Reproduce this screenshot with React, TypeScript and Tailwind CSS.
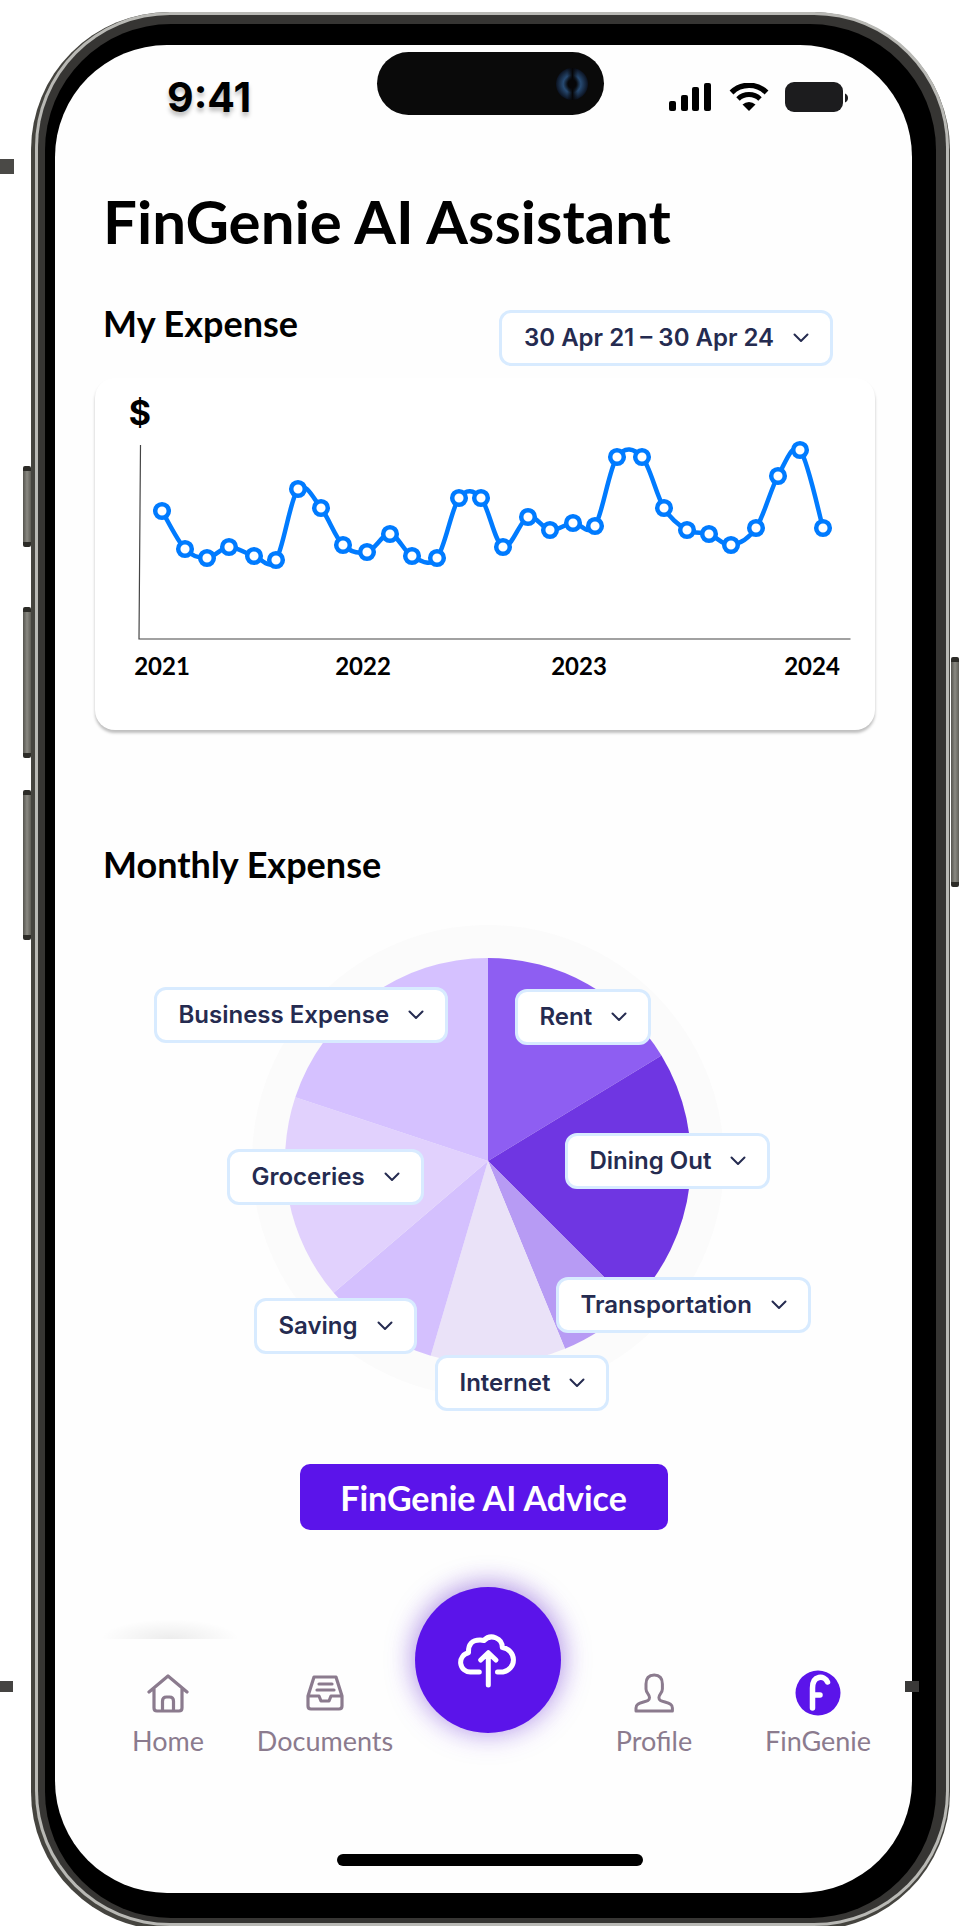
import React from 'react';

const points: [number, number][] = [
  [162, 511], [185, 549], [207, 558], [229, 547], [254, 556], [276, 560], [298, 489], [321, 508],
  [343, 545], [367, 552], [390, 534], [412, 556], [437, 558], [459, 498], [481, 498], [503, 547],
  [528, 517], [550, 530], [573, 523], [595, 526], [617, 457], [642, 457], [664, 508], [687, 530],
  [709, 534], [731, 545], [756, 528], [778, 476], [800, 450], [823, 528],
].map(([x, y]) => [x - 95, y - 378]);

function smoothPath(pts: [number, number][]) {
  let d = `M${pts[0][0]} ${pts[0][1]}`;
  for (let i = 0; i < pts.length - 1; i++) {
    const p0 = pts[Math.max(0, i - 1)];
    const p1 = pts[i];
    const p2 = pts[i + 1];
    const p3 = pts[Math.min(pts.length - 1, i + 2)];
    d += ` C${p1[0] + (p2[0] - p0[0]) / 6} ${p1[1] + (p2[1] - p0[1]) / 6} ${p2[0] - (p3[0] - p1[0]) / 6} ${p2[1] - (p3[1] - p1[1]) / 6} ${p2[0]} ${p2[1]}`;
  }
  return d;
}

const slices = [
  { from: 0, to: 58.7, color: '#8e5ef2' },
  { from: 58.7, to: 135, color: '#6f36e2' },
  { from: 135, to: 157.7, color: '#b79bf4' },
  { from: 157.7, to: 196.4, color: '#eae2f8' },
  { from: 196.4, to: 229.5, color: '#d4c0fe' },
  { from: 229.5, to: 288.3, color: '#e1d1fd' },
  { from: 288.3, to: 360, color: '#d5c1ff' },
];

function slicePath(from: number, to: number) {
  const r = 203;
  const at = (deg: number) => {
    const a = (deg * Math.PI) / 180;
    return `${236 + r * Math.sin(a)} ${236 - r * Math.cos(a)}`;
  };
  return `M236 236 L${at(from)} A${r} ${r} 0 0 1 ${at(to)} Z`;
}

function Dropdown({ label, name }: { label: string; name: string }) {
  return (
    <div className="relative inline-flex">
      <select
        aria-label={name}
        className="h-14 appearance-none rounded-xl border-[3px] border-[#d8ebff] bg-white pl-[22px] pr-[55px] font-['Inter',sans-serif] text-2xl font-semibold text-[#252b50]"
      >
        <option>{label}</option>
      </select>
      <svg
        className="pointer-events-none absolute right-6 top-1/2 -mt-2 h-4 w-4"
        viewBox="0 0 16 16"
        fill="none"
        stroke="#252b50"
        strokeWidth="2"
        strokeLinecap="round"
        strokeLinejoin="round"
      >
        <path d="M1.500 4.500 8 11l6.500-6.500" />
      </svg>
    </div>
  );
}

const categories = [
  { label: 'Business Expense', place: 'left-0 top-[62px]' },
  { label: 'Rent', place: 'left-[361px] top-[64px]' },
  { label: 'Dining Out', place: 'left-[411px] top-[208px]' },
  { label: 'Groceries', place: 'left-[73px] top-[224px]' },
  { label: 'Transportation', place: 'left-[402px] top-[352px]' },
  { label: 'Saving', place: 'left-[100px] top-[373px]' },
  { label: 'Internet', place: 'left-[281px] top-[430px]' },
];

function SideButton({ className }: { className: string }) {
  return (
    <div
      className={`absolute w-2 rounded-xs border-y-[5px] border-[#2c2b27] bg-linear-to-r from-[#55544e] via-[#8a8982] to-[#5f5e57] ${className}`}
    />
  );
}

function NavItem({ label, children }: { label: string; children: React.ReactNode }) {
  return (
    <a href="#" className="flex flex-col items-center gap-2 text-[27px] leading-8 text-[#8b7b8e]">
      <span className="flex h-12 items-center justify-center">{children}</span>
      {label}
    </a>
  );
}

function ExpenseChart() {
  return (
    <svg viewBox="0 0 780 352" className="block w-full font-['Lato',sans-serif]" role="img" aria-label="Expenses 2021 to 2024">
      <text x="45" y="47" fontSize="34" fontWeight="700" textAnchor="middle" className="font-['Inter',sans-serif]">$</text>
      <path d="M45.500 67 L44 261 H755.500" fill="none" stroke="#444" strokeWidth="1.2" />
      <path d={smoothPath(points)} fill="none" stroke="#007bff" strokeWidth="4.5" strokeLinejoin="round" />
      {points.map(([x, y]) => (
        <circle key={x} cx={x} cy={y} r="6.8" fill="#fff" stroke="#007bff" strokeWidth="4.5" />
      ))}
      <g fontSize="24" fontWeight="700" textAnchor="middle">
        <text x="67" y="297">2021</text>
        <text x="268" y="297">2022</text>
        <text x="484" y="297">2023</text>
        <text x="717" y="297">2024</text>
      </g>
    </svg>
  );
}

export default function App() {
  return (
    <div className="relative flex min-h-screen flex-col overflow-hidden bg-white pl-[31px] pr-[13px] pt-3 font-['Lato',sans-serif] text-black">
      <div className="absolute left-0 top-[159px] h-[15px] w-3.5 bg-[#4a4946]" />
      <div className="absolute left-0 top-[1681px] h-[11px] w-[13px] bg-[#454442]" />
      <SideButton className="left-[23px] top-[466px] h-[81px]" />
      <SideButton className="left-[23px] top-[607px] h-[151px]" />
      <SideButton className="left-[23px] top-[790px] h-[150px]" />
      <SideButton className="right-1 top-[657px] h-[230px]" />

      <div className="-mb-1 flex grow flex-col rounded-[138px] bg-[#45443f] pb-1 pl-1 pr-px">
        <div className="flex grow flex-col rounded-[135px] bg-[#b9b9b5] p-[3px]">
          <div className="flex grow flex-col rounded-[132px] bg-[#363533] pb-[5px] pl-[7px] pr-2.5 pt-[9px]">
            <div className="flex grow flex-col rounded-[126px] bg-black pb-[25px] pl-2.5 pr-6 pt-[21px]">
              <div className="relative flex grow flex-col rounded-[112px] bg-[#fefefe]">
                <header className="grid grid-cols-[322fr_227px_308fr] items-start pt-[7px]">
                  <time className="mt-5 pl-[112px] font-['Inter',sans-serif] text-[41px] font-bold leading-[50px] [text-shadow:0_4px_4px_rgba(0,0,0,0.25)]">
                    9:41
                  </time>
                  <div className="flex h-[63px] items-center justify-end rounded-full bg-[#0a0a0a] pr-4">
                    <svg viewBox="0 0 32 32" className="h-8 w-8">
                      <defs>
                        <radialGradient id="lens">
                          <stop offset="0.25" stopColor="#060608" />
                          <stop offset="0.55" stopColor="#274a72" />
                          <stop offset="1" stopColor="#0b1220" />
                        </radialGradient>
                        <linearGradient id="slit">
                          <stop offset="0" stopColor="#060608" stopOpacity="0" />
                          <stop offset="0.5" stopColor="#060608" />
                          <stop offset="1" stopColor="#060608" stopOpacity="0" />
                        </linearGradient>
                      </defs>
                      <circle cx="16" cy="16" r="16" fill="url(#lens)" />
                      <rect x="11" y="0" width="11" height="32" fill="url(#slit)" />
                    </svg>
                  </div>
                  <div className="mt-[30px] flex items-center gap-[18px] pl-[65px]">
                    <svg viewBox="0 0 42 28" className="h-7 w-[42px]">
                      <rect x="0" y="18" width="7" height="10" rx="2" />
                      <rect x="12" y="12" width="7" height="16" rx="2" />
                      <rect x="23" y="4" width="7" height="24" rx="2" />
                      <rect x="35" y="0" width="7" height="28" rx="2" />
                    </svg>
                    <svg viewBox="0 0 40 28" className="h-7 w-10">
                      <path d="M2.500 9.500a25 25 0 0 1 35 0" fill="none" stroke="#000" strokeWidth="5.500" />
                      <path d="M9 16a16 16 0 0 1 22 0" fill="none" stroke="#000" strokeWidth="5" />
                      <path d="M20 28l-6.500-6.500a9.500 9.500 0 0 1 13 0z" />
                    </svg>
                    <svg viewBox="0 0 64 30" className="-ml-0.5 h-[30px] w-16">
                      <rect x="0" y="0" width="58" height="30" rx="9" fill="#1c1c1e" />
                      <path d="M60 11.500c4 1.500 4 7.500 0 9z" fill="#1c1c1e" />
                    </svg>
                  </div>
                </header>

                <main className="flex flex-col pl-10 pr-[37px]">
                  <h1 className="mt-[63px] pl-2 text-[60px] font-bold leading-[72px]">FinGenie AI Assistant</h1>
                  <div className="mt-11 flex h-[65px] items-start justify-between pl-2 pr-[42px]">
                    <h2 className="text-4xl font-bold leading-[44px]">My Expense</h2>
                    <div className="flex self-end">
                      <Dropdown name="Date range" label="30 Apr 21 – 30 Apr 24" />
                    </div>
                  </div>
                  <section className="mt-3 rounded-[20px] bg-white shadow-[0_3px_3px_rgba(0,0,0,0.25)]">
                    <ExpenseChart />
                  </section>
                  <h2 className="mt-28 pl-2 text-4xl font-bold leading-[44px]">Monthly Expense</h2>
                </main>

                <section aria-label="Monthly expense breakdown" className="relative mx-auto mt-[39px] h-[486px] w-[660px]">
                  <svg viewBox="0 0 472 472" className="absolute left-[98px] top-0 h-[472px] w-[472px]" aria-hidden="true">
                    <circle cx="236" cy="236" r="236" fill="#fbfbfb" />
                    {slices.map((s) => (
                      <path key={s.from} d={slicePath(s.from, s.to)} fill={s.color} />
                    ))}
                  </svg>
                  {categories.map((c) => (
                    <div key={c.label} className={`absolute ${c.place}`}>
                      <Dropdown name={c.label} label={c.label} />
                    </div>
                  ))}
                </section>

                <button className="mx-auto mt-[53px] h-[66px] w-[368px] rounded-[10px] bg-[#5b14ea] text-[34px] font-bold text-white">
                  FinGenie AI Advice
                </button>

                <nav className="relative mt-[109px] grid grid-cols-[158fr_156fr_170fr_162fr_166fr] items-start pl-[34px] pr-[11px] pt-[30px]">
                  <div className="absolute -top-5 left-[45px] h-5 w-[140px] bg-[radial-gradient(ellipse_at_bottom,rgba(0,0,0,0.07),transparent_70%)]" />
                  <NavItem label="Home">
                    <svg viewBox="0 0 42 40" className="h-10 w-[42px]" fill="none" stroke="currentColor" strokeWidth="3.2" strokeLinecap="round" strokeLinejoin="round">
                      <path d="M2 19 21 3l19 16M7 16v19q0 3 3 3h22q3 0 3-3V16M15.500 38V28q0-4 4-4h3q4 0 4 4v10" />
                    </svg>
                  </NavItem>
                  <NavItem label="Documents">
                    <svg viewBox="0 0 38 36" className="h-9 w-[38px]" fill="none" stroke="currentColor" strokeWidth="3.2" strokeLinecap="round" strokeLinejoin="round">
                      <path d="M8 2h22l6 19v10q0 3-3 3H5q-3 0-3-3V21zM2 21h11l2 5h8l2-5h11M13 9h13M11 15h17" />
                    </svg>
                  </NavItem>
                  <div className="flex justify-center">
                    <button
                      aria-label="Upload"
                      className="-mt-[82px] flex h-[146px] w-[146px] items-center justify-center rounded-full bg-[#5b14ea] shadow-[0_0_30px_rgba(91,20,234,0.35),0_-4px_24px_rgba(60,10,140,0.2)]"
                    >
                      <svg viewBox="0 0 60 56" className="h-14 w-[60px]" fill="none" stroke="#fff" strokeWidth="5" strokeLinecap="round" strokeLinejoin="round">
                        <path d="M21.300 40H13A9.700 9.700 0 0 1 10.500 20.800 Q10 8 22 8 Q24 8 26 8.500 A10.500 10.500 0 0 1 44.300 15.600 A12.300 12.300 0 0 1 45 40H39.500M30.300 53V21M22.700 28l7.600-7.300 7.600 7.300" />
                      </svg>
                    </button>
                  </div>
                  <NavItem label="Profile">
                    <svg viewBox="0 0 40 40" className="h-10 w-10" fill="none" stroke="currentColor" strokeWidth="3" strokeLinejoin="round">
                      <path d="M12 11c0-6 3-9 8.200-9s8.200 3 8.200 9v5c0 4-3.500 5-3.500 8.500 0 3 2 3.500 6 4.500 5 1.500 7.500 2.500 7.500 6v3H2v-3c0-3.500 2.500-4.500 7.500-6 4-1 6-1.500 6-4.500 0-3.500-3.500-4.500-3.500-8.500z" />
                    </svg>
                  </NavItem>
                  <NavItem label="FinGenie">
                    <svg viewBox="0 0 46 46" className="h-[46px] w-[46px]" fill="none" stroke="#fff" strokeWidth="5.500" strokeLinecap="round">
                      <circle cx="23" cy="23" r="22.500" fill="#5b14ea" stroke="none" />
                      <path d="M17.500 38V18c0-13 12-13 15-6M18 25h7" />
                    </svg>
                  </NavItem>
                </nav>

                <div className="mt-auto flex justify-center pb-[27px] pl-3">
                  <div className="h-3 w-[306px] rounded-full bg-black" />
                </div>
                <div className="absolute -right-[7px] bottom-[201px] h-[11px] w-3.5 bg-[#3a3938]" />
              </div>
            </div>
          </div>
        </div>
      </div>
    </div>
  );
}
